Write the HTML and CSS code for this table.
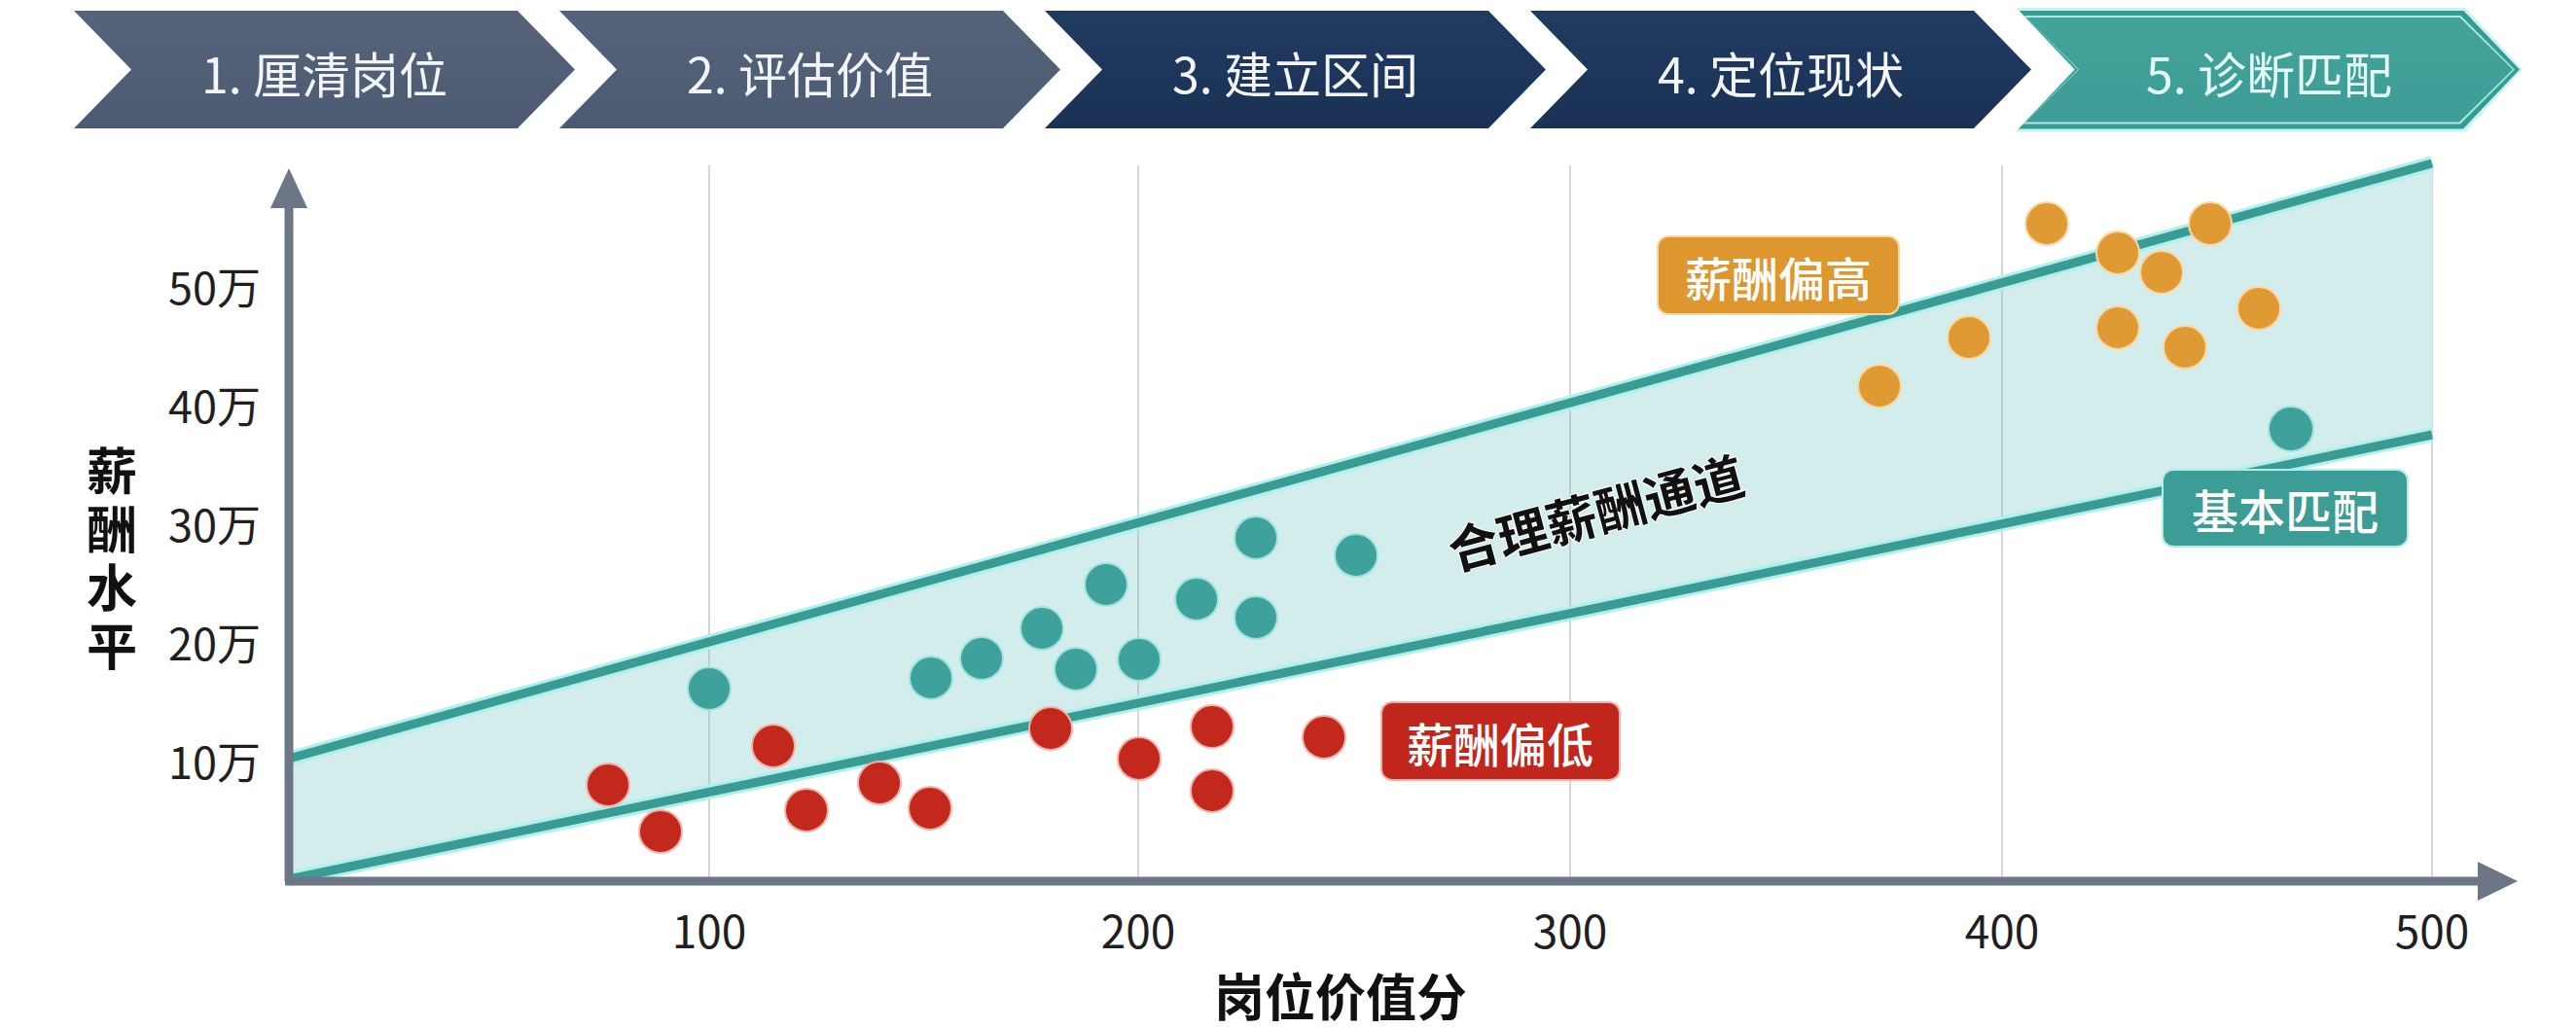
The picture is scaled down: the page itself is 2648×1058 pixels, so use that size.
FILE: index.html
```html
<!DOCTYPE html>
<html lang="zh-CN">
<head>
<meta charset="utf-8">
<title>薪酬诊断匹配</title>
<link rel="stylesheet" href="styles.css">
</head>
<body>
<div class="page">
  <div class="steps">
    <div class="step step-slate"><span>1. 厘清岗位</span></div>
    <div class="step step-slate"><span>2. 评估价值</span></div>
    <div class="step step-navy"><span>3. 建立区间</span></div>
    <div class="step step-navy"><span>4. 定位现状</span></div>
    <div class="step step-active">
      <div class="ring">
        <div class="inner-line">
          <div class="core"><span>5. 诊断匹配</span></div>
        </div>
      </div>
    </div>
  </div>

  <svg class="chart" viewBox="0 143 2648 915" width="2648" height="915" xmlns="http://www.w3.org/2000/svg">
    <!-- grid -->
    <g class="grid">
      <line x1="729" y1="170" x2="729" y2="903"/>
      <line x1="1170" y1="170" x2="1170" y2="903"/>
      <line x1="1614" y1="170" x2="1614" y2="903"/>
      <line x1="2058" y1="170" x2="2058" y2="903"/>
      <line x1="2500" y1="170" x2="2500" y2="903"/>
    </g>

    <!-- band -->
    <polygon class="band" points="297,780 2500,168 2500,447 297,904"/>
    <line class="grid-over" x1="729" y1="661" x2="729" y2="814"/>
    <line class="grid-over" x1="1170" y1="538" x2="1170" y2="723"/>
    <line class="grid-over" x1="1614" y1="414" x2="1614" y2="631"/>
    <line class="grid-over" x1="2058" y1="291" x2="2058" y2="539"/>
    <line class="edge-glow" x1="297" y1="780" x2="2500" y2="168"/>
    <line class="edge-glow" x1="297" y1="904" x2="2500" y2="447"/>
    <line class="edge" x1="297" y1="780" x2="2500" y2="168"/>
    <line class="edge" x1="297" y1="904" x2="2500" y2="447"/>

    <!-- axes -->
    <line class="axis" x1="297" y1="210" x2="297" y2="906"/>
    <polygon class="axis-head" points="278,214 297,173 316,214"/>
    <line class="axis" x1="293" y1="906" x2="2550" y2="906"/>
    <polygon class="axis-head" points="2547,886 2588,906 2547,926"/>

    <!-- y ticks -->
    <text class="ytick" x="268" y="293">50万</text>
    <text class="ytick" x="268" y="415">40万</text>
    <text class="ytick" x="268" y="537">30万</text>
    <text class="ytick" x="268" y="659">20万</text>
    <text class="ytick" x="268" y="781">10万</text>

    <!-- x ticks -->
    <text class="xtick" x="729" y="955">100</text>
    <text class="xtick" x="1170" y="955">200</text>
    <text class="xtick" x="1614" y="955">300</text>
    <text class="xtick" x="2058" y="955">400</text>
    <text class="xtick" x="2500" y="955">500</text>

    <!-- axis titles -->
    <text class="ytitle" x="115" y="578">薪酬水平</text>
    <text class="xtitle" x="1378" y="1022">岗位价值分</text>

    <!-- channel label -->
    <text class="channel" x="1640" y="525" transform="rotate(-15 1640 525)">合理薪酬通道</text>

    <!-- teal dots -->
    <g class="dot dot-teal">
      <circle cx="729" cy="708" r="22"/>
      <circle cx="957" cy="697" r="22"/>
      <circle cx="1009" cy="677" r="22"/>
      <circle cx="1071" cy="646" r="22"/>
      <circle cx="1106" cy="688" r="22"/>
      <circle cx="1137" cy="601" r="22"/>
      <circle cx="1171" cy="678" r="22"/>
      <circle cx="1230" cy="616" r="22"/>
      <circle cx="1291" cy="553" r="22"/>
      <circle cx="1291" cy="635" r="22"/>
      <circle cx="1394" cy="571" r="22"/>
      <circle cx="2355" cy="441" r="23"/>
    </g>

    <!-- red dots -->
    <g class="dot dot-red">
      <circle cx="625" cy="807" r="22"/>
      <circle cx="679" cy="855" r="22"/>
      <circle cx="795" cy="767" r="22"/>
      <circle cx="829" cy="833" r="22"/>
      <circle cx="904" cy="805" r="22"/>
      <circle cx="956" cy="831" r="22"/>
      <circle cx="1080" cy="749" r="22"/>
      <circle cx="1171" cy="780" r="22"/>
      <circle cx="1246" cy="747" r="22"/>
      <circle cx="1246" cy="813" r="22"/>
      <circle cx="1361" cy="758" r="22"/>
    </g>

    <!-- orange dots -->
    <g class="dot dot-orange">
      <circle cx="2104" cy="230" r="22"/>
      <circle cx="2177" cy="260" r="22"/>
      <circle cx="2272" cy="230" r="22"/>
      <circle cx="2222" cy="280" r="22"/>
      <circle cx="2322" cy="317" r="22"/>
      <circle cx="2024" cy="347" r="22"/>
      <circle cx="2177" cy="337" r="22"/>
      <circle cx="2246" cy="357" r="22"/>
      <circle cx="1932" cy="397" r="22"/>
    </g>

    <!-- badges -->
    <rect class="badge badge-orange" x="1704" y="243" width="248" height="80" rx="11"/>
    <text class="badge-text" x="1828" y="284">薪酬偏高</text>

    <rect class="badge badge-teal" x="2223" y="483" width="252" height="79" rx="11"/>
    <text class="badge-text" x="2349" y="523">基本匹配</text>

    <rect class="badge badge-red" x="1420" y="722" width="245" height="80" rx="11"/>
    <text class="badge-text" x="1542" y="763">薪酬偏低</text>
  </svg>
</div>
</body>
</html>
```

FILE: styles.css
```css
* {
  box-sizing: border-box;
}

html, body {
  margin: 0;
  padding: 0;
  background: #ffffff;
}

body {
  width: 2648px;
  height: 1058px;
  overflow: hidden;
  font-family: "Noto Sans CJK SC", "Noto Sans", sans-serif;
}

.page {
  display: flex;
  flex-direction: column;
  width: 2648px;
  height: 1058px;
}

/* ---------- step chevrons ---------- */
.steps {
  display: flex;
  align-items: center;
  height: 143px;
  padding-left: 76px;
  flex: none;
}

.step {
  --chev: polygon(0 0, calc(100% - 59px) 0, 100% 50%, calc(100% - 59px) 100%, 0 100%, 59px 50%);
  width: 515px;
  height: 121px;
  flex: none;
  clip-path: var(--chev);
  display: flex;
  align-items: center;
  justify-content: center;
  color: #f3f5f8;
  font-size: 50px;
  font-weight: 400;
  letter-spacing: 0;
  white-space: nowrap;
}

.step + .step {
  margin-left: -16px;
}

.step span {
  display: block;
  line-height: 1;
  padding-top: 4px;
}

.step-slate {
  background: linear-gradient(#56647b, #4d5b72);
}

.step-navy {
  background: linear-gradient(#213a60, #1b3256);
}

.step-active {
  width: 521px;
  height: 128px;
  margin-left: -20px;
  background: #c6f4f0;
  padding: 3px;
}

.step-active .ring {
  width: 100%;
  height: 100%;
  clip-path: polygon(0 0, calc(100% - 58px) 0, 100% 50%, calc(100% - 58px) 100%, 0 100%, 58px 50%);
  background: #379a93;
  padding: 5px;
}

.step-active .inner-line {
  width: 100%;
  height: 100%;
  clip-path: polygon(0 0, calc(100% - 56px) 0, 100% 50%, calc(100% - 56px) 100%, 0 100%, 56px 50%);
  background: #a9e9e4;
  padding: 2px;
}

.step-active .core {
  width: 100%;
  height: 100%;
  clip-path: polygon(0 0, calc(100% - 55px) 0, 100% 50%, calc(100% - 55px) 100%, 0 100%, 55px 50%);
  background: linear-gradient(#44a49c, #3d9c95);
  display: flex;
  align-items: center;
  justify-content: center;
  color: #e4fbf8;
}

/* ---------- chart ---------- */
.chart {
  display: block;
  flex: none;
}

.grid line {
  stroke: #d3d7dc;
  stroke-width: 2;
}

.grid-over {
  stroke: #b9cfd1;
  stroke-width: 2;
}

.band {
  fill: #d3ecec;
}

.edge-glow {
  stroke: #aef0ec;
  stroke-width: 15;
  stroke-linecap: butt;
}

.edge {
  stroke: #3a9a94;
  stroke-width: 9;
  stroke-linecap: butt;
}

.axis {
  stroke: #6c7686;
  stroke-width: 9;
}

.axis-head {
  fill: #6c7686;
}

.ytick {
  font-family: "Noto Sans CJK SC", sans-serif;
  font-size: 45px;
  fill: #1f1f1f;
  text-anchor: end;
  dominant-baseline: central;
}

.xtick {
  font-family: "Noto Sans CJK SC", sans-serif;
  font-size: 46px;
  fill: #1f1f1f;
  text-anchor: middle;
  dominant-baseline: central;
}

.ytitle,
.xtitle {
  font-family: "Noto Sans CJK SC", sans-serif;
  font-size: 52px;
  font-weight: 700;
  fill: #111111;
  text-anchor: middle;
  dominant-baseline: central;
}

.ytitle {
  writing-mode: vertical-rl;
  letter-spacing: 8px;
}

.channel {
  font-family: "Noto Sans CJK SC", sans-serif;
  font-size: 52px;
  font-weight: 700;
  fill: #111111;
  text-anchor: middle;
  dominant-baseline: central;
  stroke: #ffffff;
  stroke-width: 2px;
  paint-order: stroke;
}

.dot circle {
  stroke-width: 2;
}

.dot-teal circle {
  fill: #3ea19b;
  stroke: #9fe3df;
}

.dot-red circle {
  fill: #c2281c;
  stroke: #f2b1a8;
}

.dot-orange circle {
  fill: #e09a34;
  stroke: #f8d9a6;
}

.badge {
  stroke-width: 2;
}

.badge-orange {
  fill: #de972f;
  stroke: #f6d7a2;
}

.badge-teal {
  fill: #3c9c96;
  stroke: #b2ece8;
}

.badge-red {
  fill: #c0261b;
  stroke: #eeb0a8;
}

.badge-text {
  font-family: "Noto Sans CJK SC", sans-serif;
  font-size: 48px;
  font-weight: 500;
  fill: #ffffff;
  text-anchor: middle;
  dominant-baseline: central;
}
```
